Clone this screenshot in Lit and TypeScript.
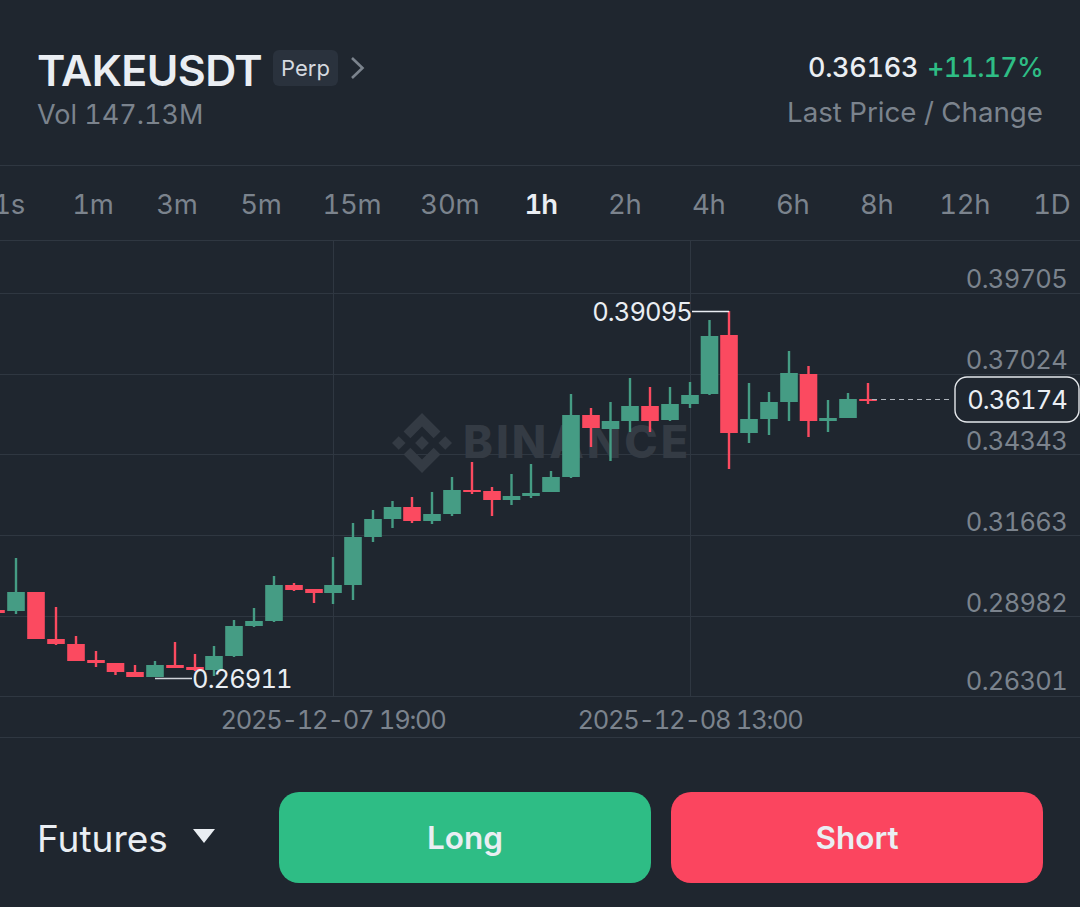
import { LitElement, html, css, svg } from 'lit';
import { customElement, property } from 'lit/decorators.js';

// x, wick top, wick bottom, body top, body bottom, up?
type Candle = [number, number, number, number, number, boolean];

const candles: Candle[] = [
  [-4, 609, 613, 610, 613, false],
  [16, 558, 614, 592, 611, true],
  [36, 592, 639, 592, 639, false],
  [56, 607, 645, 639, 644, false],
  [76, 636, 661, 644, 661, false],
  [96, 651, 667, 660, 663, false],
  [115.5, 663, 675, 663, 672, false],
  [135, 665, 677, 672, 677, false],
  [155, 661, 677, 665, 677, true],
  [175, 642, 668, 665, 668, false],
  [195, 654, 671, 667, 670, false],
  [214, 646, 676, 656, 670, true],
  [234, 620, 657, 626, 656, true],
  [254, 608, 627, 621, 626, true],
  [274, 576, 622, 585, 621, true],
  [294, 583, 591, 585, 590, false],
  [314, 589, 603, 589, 593, false],
  [333, 557, 604, 585, 593, true],
  [353, 523, 600, 537, 585, true],
  [373, 510, 542, 519, 537, true],
  [392.5, 501, 528, 507, 519, true],
  [412, 497, 523, 507, 521, false],
  [432, 492, 524, 514, 521, true],
  [452, 477, 516, 490, 514, true],
  [472, 462, 494, 490, 492, false],
  [492, 487, 516, 491, 500, false],
  [511.5, 474, 505, 496, 500, true],
  [531, 464, 498, 493, 496, true],
  [551, 471, 492, 477, 492, true],
  [571, 394, 478, 415, 477, true],
  [591, 408, 447, 415, 428, false],
  [610.5, 402, 461, 421, 429, true],
  [630, 378, 432, 406, 421, true],
  [650, 387, 432, 406, 421, false],
  [670, 387, 421, 404, 420, true],
  [690, 382, 408, 395, 404, true],
  [709.5, 320, 395, 336, 394, true],
  [729, 311, 469, 335, 433, false],
  [749, 383, 443, 419, 433, true],
  [769, 392, 435, 402, 419, true],
  [789, 351, 421, 373, 402, true],
  [808.5, 366, 437, 374, 421, false],
  [828, 400, 432, 418, 421, true],
  [848, 393, 418, 399, 418, true],
  [868, 383, 404, 399, 401, false],
];

const priceLabels: [string, number][] = [
  ['0.39705', 278],
  ['0.37024', 359],
  ['0.34343', 440],
  ['0.31663', 521],
  ['0.28982', 602],
  ['0.26301', 680],
];

const gridY = [293, 374, 454, 535, 616, 696];
const gridX = [333, 690];
const intervals = ['1s', '1m', '3m', '5m', '15m', '30m', '1h', '2h', '4h', '6h', '8h', '12h', '1D'];

@customElement('app-root')
export class AppRoot extends LitElement {
  @property({ type: String })
  active = '1h';

  static styles = css`
    :host {
      display: block;
      width: 1080px;
      height: 907px;
      overflow: hidden;
      background: #1f262f;
      font-family: Inter, 'Noto Sans', sans-serif;
      font-variant-numeric: tabular-nums;
      color: #eaecef;
    }

    .header {
      display: flex;
      justify-content: space-between;
      height: 166px;
      box-sizing: border-box;
      padding: 47px 37px 0 37px;
      border-bottom: 1px solid #2f3741;
    }

    .title-row {
      display: flex;
      align-items: center;
      height: 46px;
    }

    .symbol {
      font-size: 43px;
      font-weight: 600;
      letter-spacing: -0.6px;
      color: #eaeef3;
    }

    .badge {
      margin: -5px 0 0 11px;
      padding: 0 8px;
      height: 36px;
      line-height: 37px;
      font-size: 22px;
      border-radius: 6px;
      background: #2a323d;
      color: #d5d9df;
    }

    .chevron {
      margin: -5px 0 0 12px;
      width: 15px;
      height: 24px;
    }

    .vol {
      margin-top: 5px;
      font-size: 27px;
      line-height: 34px;
      color: #7b838d;
    }

    .quote {
      padding-top: 4px;
      text-align: right;
      font-size: 27.7px;
      line-height: 34px;
      color: #7b838d;
    }

    .quote .prices {
      font-size: 27px;
      font-weight: 500;
      letter-spacing: -0.3px;
      word-spacing: 2px;
      color: #eaeef3;
      margin-bottom: 10px;
    }

    .quote .change {
      letter-spacing: -0.8px;
      color: #2ebd85;
    }

    .tabs {
      display: flex;
      align-items: center;
      height: 72px;
      padding-top: 2px;
      margin-left: -33px;
      width: 1160px;
      border-bottom: 1px solid #2f3741;
    }

    .tab {
      min-width: 84px;
      padding: 0 19.5px;
      box-sizing: border-box;
      text-align: center;
      font-size: 27.5px;
      letter-spacing: -0.3px;
      color: #7b838d;
    }

    .tab:nth-last-child(2) {
      margin-left: 1px;
    }

    .tab.on {
      color: #eaeef3;
      font-weight: 600;
      letter-spacing: -1px;
    }

    .chart {
      display: block;
      width: 1080px;
      height: 496px;
      border-bottom: 1px solid #2f3741;
    }

    .chart text {
      font-family: Inter, 'Noto Sans', sans-serif;
      font-variant-numeric: tabular-nums;
    }

    .axis {
      font-size: 25.5px;
      letter-spacing: -0.7px;
      fill: #7b838d;
    }

    .date {
      letter-spacing: -1.25px;
    }

    .mark {
      font-size: 25.5px;
      letter-spacing: -0.9px;
      fill: #eaeef3;
    }

    .wm {
      font-size: 45px;
      font-weight: 800;
      letter-spacing: 3px;
      fill: #343b44;
    }

    .footer {
      display: flex;
      align-items: center;
      padding: 54px 37px 0 37px;
    }

    .market {
      display: flex;
      align-items: center;
      width: 242px;
      margin-top: 2px;
      font-size: 37px;
      color: #eaeef3;
    }

    .caret {
      margin-left: 25px;
      margin-top: -6px;
      width: 22px;
      height: 14px;
    }

    .btn {
      flex: 1;
      height: 91px;
      line-height: 91px;
      text-align: center;
      border-radius: 20px;
      font-size: 31.5px;
      font-weight: 600;
      color: #eaeef3;
    }

    .long {
      background: #2ebd85;
    }

    .short {
      margin-left: 20px;
      background: #fb455f;
    }
  `;

  private _candle([x, wt, wb, bt, bb, up]: Candle) {
    const color = up ? '#459c84' : '#fb4a60';
    return svg`
      <rect x=${x - 1.2} y=${wt} width="2.4" height=${wb - wt} fill=${color}></rect>
      <rect x=${x - 8.8} y=${bt} width="17.6" height=${bb - bt} fill=${color}></rect>
    `;
  }

  private _chart() {
    return html`
      <svg class="chart" viewBox="0 241 1080 496">
        ${gridY.map((y) => svg`<line x1="0" x2="1080" y1=${y + 0.5} y2=${y + 0.5} stroke="#2f3741"></line>`)}
        ${gridX.map((x) => svg`<line x1=${x + 0.5} x2=${x + 0.5} y1="241" y2="697" stroke="#2f3741"></line>`)}

        <g transform="translate(392 413) scale(0.474)" fill="#343b44">
          <polygon points="38.73 53.2 63.3 28.63 87.89 53.22 102.2 38.92 63.3 0 24.42 38.9 38.73 53.2"></polygon>
          <polygon points="0 63.3 14.3 49 28.61 63.31 14.3 77.61"></polygon>
          <polygon points="38.73 73.41 63.3 97.98 87.89 73.4 102.2 87.69 63.3 126.61 24.42 87.71 38.73 73.41"></polygon>
          <polygon points="97.99 63.3 112.3 49 126.61 63.3 112.3 77.6"></polygon>
          <polygon points="77.83 63.3 63.3 48.78 48.8 63.28 63.3 77.81 77.83 63.3"></polygon>
        </g>
        <text class="wm" x="463" y="458">BINANCE</text>

        ${candles.map((c) => this._candle(c))}

        ${priceLabels.map(([t, y]) => svg`<text class="axis" x="1067" y=${y + 9.5} text-anchor="end">${t}</text>`)}
        <text class="axis date" x="333" y="729" text-anchor="middle">2025-12-07 19:00</text>
        <text class="axis date" x="690" y="729" text-anchor="middle">2025-12-08 13:00</text>

        <polyline points="692,311.5 729,311.5" fill="none" stroke="#eaeef3" stroke-width="1.5"></polyline>
        <text class="mark" x="692" y="321" text-anchor="end">0.39095</text>
        <polyline points="155,678.5 192,678.5" fill="none" stroke="#cfd3d9" stroke-width="1.5"></polyline>
        <text class="mark" x="192" y="688">0.26911</text>

        <line x1="872" x2="952" y1="399.5" y2="399.5" stroke="#aeb4bc" stroke-width="1.2" stroke-dasharray="5 4"></line>
        <rect x="955" y="377" width="124" height="45" rx="12" fill="#1f262f" stroke="#e4e7eb" stroke-width="1.4"></rect>
        <text class="mark" x="1067" y="409" text-anchor="end">0.36174</text>
      </svg>
    `;
  }

  render() {
    return html`
      <div class="header">
        <div>
          <div class="title-row">
            <span class="symbol">TAKEUSDT</span>
            <span class="badge">Perp</span>
            <svg class="chevron" viewBox="0 0 15 24">
              <path d="M2 2 L12.5 12 L2 22" fill="none" stroke="#7b838d" stroke-width="2.6"></path>
            </svg>
          </div>
          <div class="vol">Vol 147.13M</div>
        </div>
        <div class="quote">
          <div class="prices">0.36163 <span class="change">+11.17%</span></div>
          <div>Last Price / Change</div>
        </div>
      </div>

      <div class="tabs">
        ${intervals.map((t) => html`<div class="tab ${t === this.active ? 'on' : ''}">${t}</div>`)}
      </div>

      ${this._chart()}

      <div class="footer">
        <div class="market">
          Futures
          <svg class="caret" viewBox="0 0 22 14">
            <path d="M0 0 H22 L11 14 Z" fill="#eaeef3"></path>
          </svg>
        </div>
        <div class="btn long">Long</div>
        <div class="btn short">Short</div>
      </div>
    `;
  }
}
